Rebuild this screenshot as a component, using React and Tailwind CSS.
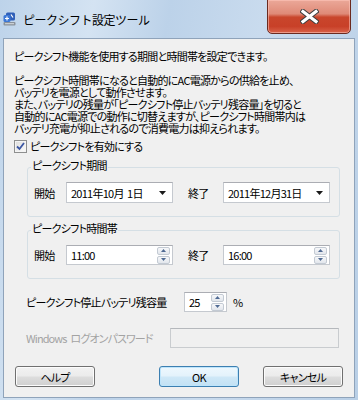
import { useState } from "react";

const font = "font-['Noto_Sans_CJK_JP','Noto_Sans',sans-serif]";

function TitleIcon() {
  return (
    <svg width="13" height="14" viewBox="0 0 13 14">
      <rect x="3" y="0.5" width="9" height="8" rx="1.5" fill="#2f5fb8" />
      <rect x="0.5" y="3" width="7" height="7" rx="1.5" fill="#3d78d6" />
      <path d="M2 6.5h4M4 4.5v4M8 2.5l2 3" stroke="#fff" strokeWidth="1.2" fill="none" />
      <rect x="0.5" y="10" width="12" height="3.5" rx="1" fill="#8c939c" />
      <path d="M2 11.7h9" stroke="#d8dde2" strokeWidth="1" />
    </svg>
  );
}

function CloseButton() {
  return (
    <button className="ml-auto mr-[4px] mt-[-1px] w-[84px] h-[35px] rounded-b-[5px] border border-[#6b2a1f] bg-[linear-gradient(#eba899_0%,#df8a77_42%,#c9462c_52%,#c84028_80%,#d9634a_100%)] shadow-[inset_0_0_0_1px_rgba(255,200,190,0.55)] flex items-center justify-center">
      <svg width="19" height="15" viewBox="0 0 19 15">
        <path d="M3 2.5L16 12.5M16 2.5L3 12.5" stroke="#3d3d3d" strokeWidth="5.2" strokeLinecap="square" />
        <path d="M3 2.5L16 12.5M16 2.5L3 12.5" stroke="#fff" strokeWidth="3.2" strokeLinecap="square" />
      </svg>
    </button>
  );
}

function Combo({ value }) {
  return (
    <div className="w-[107px] h-[21px] bg-white border border-[#c5c9cf] border-t-[#abadb3] flex items-center pl-[4px] pr-[6px]">
      <span className="flex-1 whitespace-pre">{value}</span>
      <svg width="7" height="4" viewBox="0 0 7 4">
        <path d="M0 0h7L3.5 4z" fill="#1a1a1a" />
      </svg>
    </div>
  );
}

function SpinButtons() {
  return (
    <div className="flex flex-col gap-[1px] mr-[2px]">
      {[0, 1].map((i) => (
        <div
          key={i}
          className="w-[13px] h-[8px] rounded-[2px] border border-[#c3cad3] bg-[linear-gradient(#f7f8fa,#e2e6ec)] flex items-center justify-center"
        >
          <svg width="5" height="3" viewBox="0 0 5 3">
            <path d={i === 0 ? "M0 3h5L2.5 0z" : "M0 0h5L2.5 3z"} fill="#4f6a93" />
          </svg>
        </div>
      ))}
    </div>
  );
}

function Spin({ value, w = "w-[107px]" }) {
  return (
    <div className={`${w} h-[20px] bg-white border border-[#c5c9cf] border-t-[#abadb3] flex items-center pl-[4px]`}>
      <span className="flex-1">{value}</span>
      <SpinButtons />
    </div>
  );
}

function Group({ title, children }) {
  return (
    <div className="relative ml-[23px] w-[313px] border border-[#d5dfe5] rounded-[3px] pl-[6px]">
      <span className="absolute left-[3px] top-[-9px] px-[1px] bg-[#f0f0f0] whitespace-nowrap">{title}</span>
      {children}
    </div>
  );
}

function WinButton({ label, primary }) {
  return (
    <button
      className={
        "w-[80px] h-[21px] rounded-[3px] border flex items-center justify-center " +
        (primary
          ? "border-[#3c7fb1] bg-[linear-gradient(#eef8fe_0%,#e3f2fb_48%,#cfe8f7_52%,#c2e1f4_100%)] shadow-[inset_0_0_0_1px_#bfe5fb]"
          : "border-[#707070] bg-[linear-gradient(#f2f2f2_0%,#ebebeb_48%,#dddddd_52%,#cfcfcf_100%)] shadow-[inset_0_0_0_1px_#fcfcfc]")
      }
    >
      {label}
    </button>
  );
}

export default function App() {
  const [enabled, setEnabled] = useState(true);

  return (
    <div className={`${font} w-[358px] h-[400px] flex flex-col px-[3px] text-[11px] tracking-[-0.75px] text-black bg-[linear-gradient(100deg,#bdd3ea_0%,#d4e3f2_22%,#bcd2e9_40%,#c9dbee_62%,#b9cfe6_100%)]`}>
      <div className="h-[38px] flex items-start shrink-0">
        <div className="flex items-center h-[38px] gap-[7px]">
          <TitleIcon />
          <span className="text-[12px] tracking-[-0.5px] leading-[14px] mt-[1px]">ピークシフト設定ツール</span>
        </div>
        <CloseButton />
      </div>

      <div className="flex-1 min-h-0 mb-[2px] bg-[#f0f0f0] border border-[#8fa3ba] flex flex-col leading-[12px] whitespace-nowrap [font-feature-settings:'palt']">
        <p className="mt-[11px] ml-[10px]">ピークシフト機能を使用する期間と時間帯を設定できます。</p>
        <p className="mt-[12px] ml-[10px]">
          ピークシフト時間帯になると自動的にAC電源からの供給を止め、
          <br />
          バッテリを電源として動作させます。
          <br />
          また、バッテリの残量が「ピークシフト停止バッテリ残容量」を切ると
          <br />
          自動的にAC電源での動作に切替えますが、ピークシフト時間帯内は
          <br />
          バッテリ充電が抑止されるので消費電力は抑えられます。
        </p>

        <label className="mt-[5px] ml-[10px] h-[14px] flex items-center gap-[3px]">
          <span
            onClick={() => setEnabled(!enabled)}
            className="w-[13px] h-[13px] border border-[#8e8f8f] bg-[linear-gradient(135deg,#dcdcdc,#fbfbfb)] shadow-[inset_0_0_0_1px_#f4f4f4] flex items-center justify-center"
          >
            {enabled && (
              <svg width="9" height="9" viewBox="0 0 9 9">
                <path d="M1 4.5L3.5 7L8 1" stroke="#3b56a3" strokeWidth="1.8" fill="none" />
              </svg>
            )}
          </span>
          <span>ピークシフトを有効にする</span>
        </label>

        <div className="mt-[14px]">
          <Group title="ピークシフト期間">
            <div className="pt-[14px] pb-[13px] flex items-center">
              <span className="w-[32px]">開始</span>
              <Combo value="2011年10月  1日" />
              <span className="ml-[15px] w-[35px]">終了</span>
              <Combo value="2011年12月31日" />
            </div>
          </Group>
        </div>

        <div className="mt-[13px]">
          <Group title="ピークシフト時間帯">
            <div className="pt-[14px] pb-[13px] flex items-center">
              <span className="w-[32px]">開始</span>
              <Spin value="11:00" />
              <span className="ml-[15px] w-[35px]">終了</span>
              <Spin value="16:00" />
            </div>
          </Group>
        </div>

        <div className="mt-[13px] ml-[22px] flex items-center">
          <span className="w-[158px]">ピークシフト停止バッテリ残容量</span>
          <Spin value="25" w="w-[43px]" />
          <span className="ml-[6px]">%</span>
        </div>

        <div className="mt-[16px] ml-[22px] flex items-center">
          <span className="w-[144px] text-[#a3a3a3] tracking-[-0.9px] flex">
            <span className="mr-[4px]">Windows</span>
            <span>ログオンパスワード</span>
          </span>
          <div className="w-[169px] h-[20px] bg-[#f0f0f0] border border-[#c9cccf] border-t-[#b5b8bc]" />
        </div>

        <div className="mt-[18px] ml-[11px] flex items-center">
          <WinButton label="ヘルプ" />
          <div className="ml-[64px]">
            <WinButton label="OK" primary />
          </div>
          <div className="ml-[24px]">
            <WinButton label="キャンセル" />
          </div>
        </div>
      </div>
    </div>
  );
}
